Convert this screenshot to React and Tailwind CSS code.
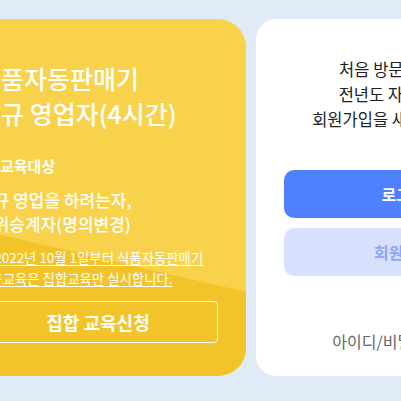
import { Check } from 'lucide-react';

const FONT = "font-['Noto_Sans_CJK_KR','Noto_Sans',sans-serif]";

function EduCard() {
  return (
    <section className="relative h-[357px] w-[296px] shrink-0 overflow-hidden rounded-[28px] bg-[#f9d24b]">
      {/* darker lower half, cut on a slant */}
      <svg className="absolute inset-0 h-full w-full" viewBox="0 0 296 357" preserveAspectRatio="none">
        <polygon points="0,204 296,273 296,357 0,357" fill="#f2c42a" />
      </svg>

      <div className="relative flex flex-col px-[28px] pt-[42px] text-white">
        <h2 className="text-[25px] font-medium leading-[35px]">
          식품자동판매기
          <br />
          신규 영업자(4시간)
        </h2>

        <p className="mt-[23px] flex items-center gap-[6px] text-[15px] font-bold leading-[24px]">
          <Check className="h-[16px] w-[16px]" strokeWidth={3} />
          교육대상
        </p>
        <p className="mt-[10px] text-[17px] font-medium leading-[24px]">
          신규 영업을 하려는자,
          <br />
          지위승계자(명의변경)
        </p>

        <p className="mt-[11px] text-[13.4px] leading-[21px] underline underline-offset-2">
          ※ 2022년 10월 1일부터 식품자동판매기
          <br />
          신규교육은 집합교육만 실시합니다.
        </p>

        <button className="mt-[12px] flex h-[42px] items-center justify-center rounded-[4px] border border-white text-[18px] font-bold">
          집합 교육신청
        </button>
      </div>
    </section>
  );
}

function LoginCard() {
  return (
    <section className="flex h-[357px] w-[295px] shrink-0 flex-col rounded-[20px] bg-white px-[28px] pt-[38px]">
      <p className="text-center text-[16.5px] leading-[25px] text-[#222]">
        처음 방문하신 분은
        <br />
        전년도 자격자라도,
        <br />
        회원가입을 새로 해 주세요.
      </p>

      <div className="mt-[38px] flex flex-col gap-[10px]">
        <button className="h-[48px] rounded-[10px] bg-[#4f80ff] text-[16px] font-bold text-white">로그인</button>
        <button className="h-[48px] rounded-[10px] bg-[#d7e1fd] text-[16px] font-bold text-[#8da5f6]">회원가입</button>
      </div>

      <p className="mt-[54px] text-center text-[16px] leading-[22px] text-[#666]">아이디/비밀번호 찾기</p>
    </section>
  );
}

export default function App() {
  return (
    <div className={`min-h-screen overflow-hidden bg-[#e0ebf7] pt-[19px] ${FONT}`}>
      <div className="ml-[-50px] flex w-[602px] gap-[10px]">
        <EduCard />
        <LoginCard />
      </div>
    </div>
  );
}
